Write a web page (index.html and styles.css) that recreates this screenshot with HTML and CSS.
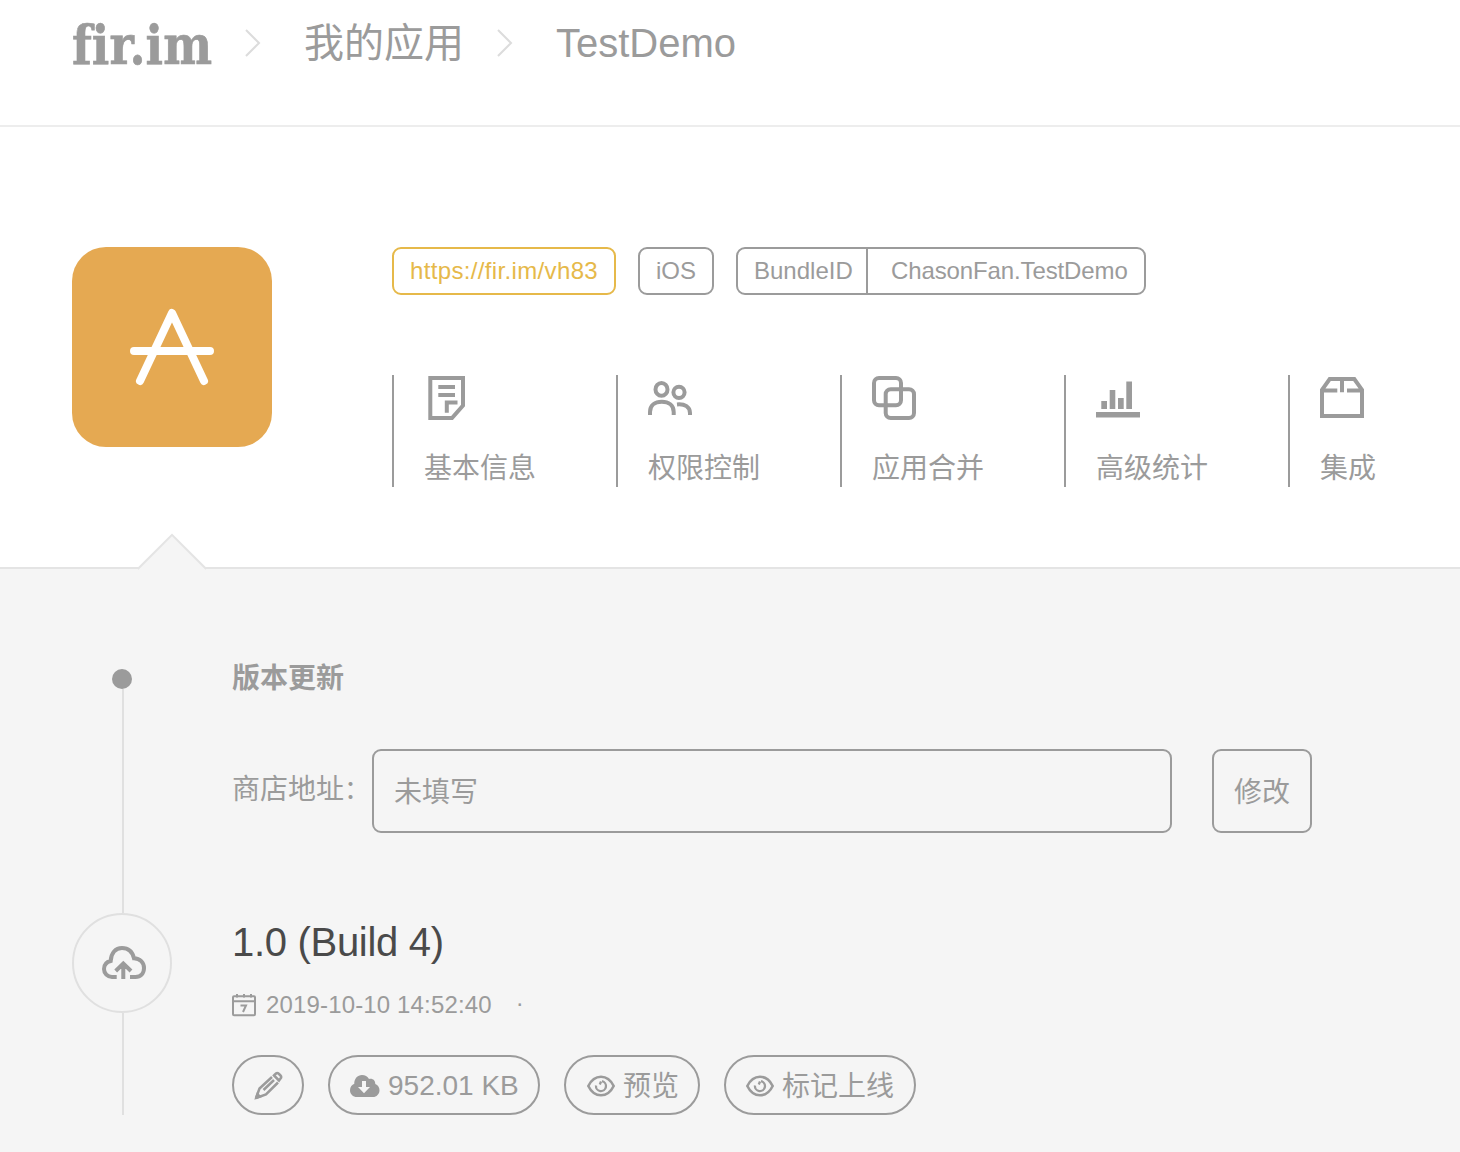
FILE: index.html
```html
<!DOCTYPE html>
<html lang="zh-CN">
<head>
<meta charset="utf-8">
<title>TestDemo - fir.im</title>
<link rel="stylesheet" href="styles.css">
</head>
<body>
<header class="topbar">
  <svg class="logo" width="142" height="76" viewBox="0 0 142 76"><text x="0" y="58" textLength="140" lengthAdjust="spacingAndGlyphs">fir.im</text></svg>
  <svg class="chevron" width="18" height="30" viewBox="0 0 18 30"><path d="M2 2L15 15L2 28"/></svg>
  <span class="crumb">我的应用</span>
  <svg class="chevron second" width="18" height="30" viewBox="0 0 18 30"><path d="M2 2L15 15L2 28"/></svg>
  <span class="crumb">TestDemo</span>
</header>

<section class="app">
  <div class="app-icon">
    <svg width="84" height="78" viewBox="0 0 84 78"><path d="M10 73L42 5L74 73M4 43H80"/></svg>
  </div>
  <div class="app-info">
    <div class="tags">
      <a class="tag link">https://fir.im/vh83</a>
      <span class="tag platform">iOS</span>
      <span class="tag bundle"><span class="bundle-key">BundleID</span><span class="bundle-value">ChasonFan.TestDemo</span></span>
    </div>
    <nav class="tabs">
      <a class="tab"><svg class="icon" width="46" height="48" viewBox="0 0 46 48"><path d="M6.3 3H39V30.5L28 43H6.3Z"/><path d="M14.3 12H31M14.3 20H31M33.5 27.5H22.8V37.8"/></svg><span>基本信息</span></a>
      <a class="tab"><svg class="icon" width="46" height="48" viewBox="0 0 46 48"><ellipse cx="13.5" cy="14.4" rx="6" ry="6.4"/><circle cx="31" cy="17.3" r="5.6"/><path d="M2 40V37C2 30 7 26.8 13.8 26.8S25.7 30 25.7 37V40M29 29.4C37 28.6 42 32 42 38V40"/></svg><span>权限控制</span></a>
      <a class="tab"><svg class="icon" width="46" height="48" viewBox="0 0 46 48"><rect x="2" y="3" width="27" height="27.3" rx="5"/><rect x="13.7" y="14.3" width="28.3" height="28.7" rx="5"/></svg><span>应用合并</span></a>
      <a class="tab"><svg class="icon solid" width="46" height="48" viewBox="0 0 46 48"><path d="M0 37H44V42.6H0ZM5.3 26H11V34H5.3ZM13.7 15H19.3V34H13.7ZM22 23H27.7V34H22ZM30.3 6.6H36V34H30.3Z"/></svg><span>高级统计</span></a>
      <a class="tab"><svg class="icon" width="46" height="48" viewBox="0 0 46 48"><path d="M2 41V14.8L9.7 4H34.3L42 14.8V41ZM4 15.5H17.3M27 15.5H40M22 4V17.3"/></svg><span>集成</span></a>
    </nav>
  </div>
</section>

<main class="versions">
  <svg class="pointer" width="70" height="38" viewBox="0 0 70 38"><path class="pointer-fill" d="M1 38L2 35L35 2L68 35L69 38Z"/><path class="pointer-edge" d="M.8 36L35 1.8L69.2 36"/></svg>
  <div class="rail">
    <span class="dot"></span>
    <span class="line upper"></span>
    <span class="node"><svg class="icon" width="44" height="34" viewBox="0 0 44 34"><path d="M14.7 31H10C5.5 31 2 27.5 2 23C2 19 4.5 16 8.7 15C9 7 13.5 2 20 2C27 2 30.5 6 32 12.3C38 12.5 42 16.5 42 22C42 27.5 38.5 31 33.5 31H28M21.3 33V17M13.7 25L21.3 17.5L29 25"/></svg></span>
    <span class="line lower"></span>
  </div>
  <div class="content">
    <h2 class="heading">版本更新</h2>
    <div class="store">
      <span class="store-label">商店地址<span class="colon">：</span></span>
      <span class="store-input">未填写</span>
      <span class="store-edit">修改</span>
    </div>
    <h3 class="version">1.0 (Build 4)</h3>
    <div class="date">
      <svg class="icon thin" width="24" height="24" viewBox="0 0 24 24"><rect x="1" y="3.3" width="22" height="19" rx="1"/><path d="M1 8.3H23M5 1V4.5M12 1V4.5M19 1V4.5M8.5 12.5H14L11 19"/></svg>
      <span>2019-10-10 14:52:40</span><span class="sep">·</span>
    </div>
    <div class="actions">
      <a class="pill edit"><svg class="icon pencil" width="29" height="30" viewBox="0 0 29 30"><path d="M2 27L5.5 17.5L18 6M2 27L12 23.5L24 11.5M9.5 19L20 9M20 4.5L22 2.5C23 1.6 24 2 25 3L26.5 4.5C27.5 5.5 27.5 6.5 26.5 7.5L25 9.5Z"/><path class="tip" d="M0.3 28.7L3 21L8 26Z"/></svg></a>
      <a class="pill download"><svg class="icon solid" width="30" height="24" viewBox="0 0 30 24"><path fill-rule="evenodd" d="M7 23C3 23 0 20 0 16.2C0 13 2 10.7 4.3 9.8C4 5 7.5 1 12 1C15 1 17.6 2.5 19 5C22.5 4 25.5 6.5 25.3 10C28 11 29.5 13.5 29.5 16.2C29.5 20 26.5 23 23 23ZM12 7V13H8L14 19.3L20 13H16V7Z"/></svg><span>952.01 KB</span></a>
      <a class="pill preview"><svg class="icon eye" width="28" height="22" viewBox="0 0 28 22"><path d="M1.3 11C4 5.5 8.5 1.7 14 1.7S24 5.5 26.7 11C24 16.5 19.5 20.3 14 20.3S4 16.5 1.3 11Z"/><path class="iris" d="M15 6.2A5 5 0 1 1 9 10.5M14 6.5L12.8 9.5"/></svg><span>预览</span></a>
      <a class="pill mark"><svg class="icon eye" width="28" height="22" viewBox="0 0 28 22"><path d="M1.3 11C4 5.5 8.5 1.7 14 1.7S24 5.5 26.7 11C24 16.5 19.5 20.3 14 20.3S4 16.5 1.3 11Z"/><path class="iris" d="M15 6.2A5 5 0 1 1 9 10.5M14 6.5L12.8 9.5"/></svg><span>标记上线</span></a>
    </div>
  </div>
</main>
</body>
</html>
```
FILE: styles.css
```css
* { box-sizing: border-box; }
body {
  margin: 0;
  min-height: 1152px;
  display: flex;
  flex-direction: column;
  background: #fff;
  color: #9b9b9b;
  font-family: "Liberation Sans", "Noto Sans CJK SC", sans-serif;
  font-weight: 400;
  overflow: hidden;
}
svg { display: block; flex: none; }
span, a { white-space: nowrap; }

.topbar {
  height: 127px;
  border-bottom: 2px solid #ededed;
  padding: 13px 72px 0;
  display: flex;
  align-items: flex-start;
}
.logo { margin-top: -7px; overflow: visible; }
.logo text {
  font-family: "DejaVu Serif", serif;
  font-size: 55px;
  font-weight: 700;
  font-variant-ligatures: none;
  fill: #9b9b9b;
  stroke: #9b9b9b;
  stroke-width: .7;
}
.chevron { margin: 15px 42px 0 30px; fill: none; stroke: #dcdcdc; stroke-width: 2; }
.chevron.second { margin-left: 32px; margin-right: 42px; }
.crumb { font-size: 40px; line-height: 60px; }

.app { height: 440px; padding: 120px 72px 0; display: flex; gap: 120px; }
.app-icon {
  width: 200px;
  height: 200px;
  border-radius: 34px;
  background: #e5a952;
  flex: none;
  display: flex;
  align-items: center;
  justify-content: center;
}
.app-icon svg { fill: none; stroke: #fff; stroke-width: 8; stroke-linecap: round; stroke-linejoin: round; }
.tags { display: flex; gap: 22px; }
.tag {
  height: 48px;
  border: 2px solid #9b9b9b;
  border-radius: 9px;
  font-size: 24px;
  line-height: 44px;
  display: flex;
  justify-content: center;
}
.link { width: 224px; color: #e6b94a; border-color: #e6b94a; letter-spacing: .35px; }
.platform { width: 76px; }
.bundle { width: 410px; }
.bundle-key { width: 130px; padding-left: 16px; border-right: 2px solid #9b9b9b; }
.bundle-value { flex: 1; padding-left: 23px; letter-spacing: -.12px; }
.tabs { display: flex; margin-top: 80px; }
.tab {
  width: 224px;
  height: 112px;
  flex: none;
  border-left: 2px solid #9b9b9b;
  padding-left: 30px;
  font-size: 28px;
  line-height: 40px;
}
.tab span { display: block; margin-top: 26px; }
.icon { fill: none; stroke: #9b9b9b; stroke-width: 4; }
.icon.solid { fill: #9b9b9b; stroke: none; }
.icon.thin { stroke-width: 2; }
.icon.eye { stroke-width: 2.6; }
.iris { stroke-width: 2.3; }
.icon.pencil { stroke-width: 2.5; }
.tip { fill: #9b9b9b; stroke: none; }

.versions {
  position: relative;
  flex: 1;
  background: #f5f5f5;
  border-top: 2px solid #e4e4e4;
  padding: 100px 72px 0;
  display: flex;
  gap: 60px;
}
.pointer { position: absolute; left: 137px; top: -36px; }
.pointer-fill { fill: #f5f5f5; }
.pointer-edge { fill: none; stroke: #e4e4e4; stroke-width: 2; }
.rail { width: 100px; flex: none; display: flex; flex-direction: column; }
.dot { width: 20px; height: 20px; margin-left: 40px; border-radius: 50%; background: #9b9b9b; }
.line { width: 2px; margin-left: 50px; background: #e0e0e0; }
.upper { height: 224px; }
.lower { height: 102px; }
.node {
  width: 100px;
  height: 100px;
  border: 2px solid #e0e0e0;
  border-radius: 50%;
  display: flex;
  align-items: center;
  justify-content: center;
  padding-left: 3px;
}
.heading { margin: -10px 0 0; font-size: 28px; line-height: 40px; font-weight: 700; }
.store { display: flex; margin-top: 50px; font-size: 28px; line-height: 84px; }
.store-label { width: 140px; line-height: 80px; padding-top: 1px; }
.colon { font-size: 26px; }
.store-input { width: 800px; height: 84px; border: 2px solid #9b9b9b; border-radius: 9px; padding-left: 20px; }
.store-edit { width: 100px; height: 84px; margin-left: 40px; border: 2px solid #9b9b9b; border-radius: 9px; text-align: center; }
.version { margin: 84px 0 0; font-size: 40px; line-height: 50px; font-weight: 400; color: #4a4a4a; letter-spacing: -.3px; }
.date { display: flex; align-items: center; height: 30px; margin-top: 23px; font-size: 24px; letter-spacing: .15px; }
.date .icon { margin-right: 10px; }
.sep { margin-left: 24px; position: relative; top: -2px; }
.actions { display: flex; gap: 24px; margin-top: 35px; }
.pill {
  height: 60px;
  border: 2px solid #9b9b9b;
  border-radius: 30px;
  font-size: 28px;
  line-height: 56px;
  display: flex;
  align-items: center;
  padding-left: 20px;
}
.pill .icon { position: relative; top: 1px; }
.edit { width: 72px; }
.download { width: 212px; gap: 8px; }
.download span { padding-top: 1px; }
.preview { width: 136px; gap: 8px; padding-left: 21px; }
.mark { width: 192px; gap: 8px; padding-left: 20px; }
.preview span, .mark span { padding-top: 3px; }
```
